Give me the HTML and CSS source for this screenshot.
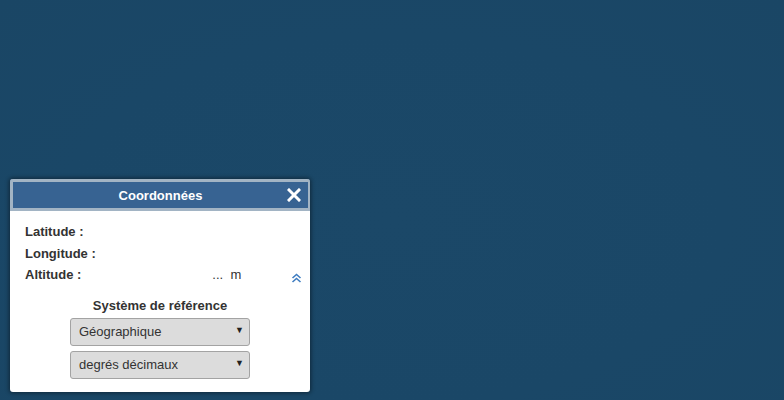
FILE: index.html
```html
<!DOCTYPE html>
<html lang="fr">
<head>
<meta charset="utf-8">
<link rel="stylesheet" href="styles.css">
</head>
<body>
<div class="map">
  <div class="panel">
    <div class="panel-header">
      <span class="panel-title">Coordonnées</span>
      <span class="close" aria-label="Fermer">
        <svg width="14" height="14" viewBox="0 0 14 14"><path d="M2 2 L12 12 M12 2 L2 12" stroke="#fff" stroke-width="3" stroke-linecap="square" fill="none"/></svg>
      </span>
    </div>
    <div class="panel-body">
      <div class="coords">
        <div class="row"><span class="label">Latitude :</span></div>
        <div class="row"><span class="label">Longitude :</span></div>
        <div class="row alt">
          <span class="label">Altitude :</span>
          <span class="alt-value">...&nbsp; m</span>
          <span class="collapse">
            <svg width="11" height="10" viewBox="0 0 11 10"><path d="M1.5 5 L5.5 1.5 L9.5 5 M1.5 9 L5.5 5.5 L9.5 9" stroke="#3f7dc1" stroke-width="1.6" fill="none"/></svg>
          </span>
        </div>
      </div>
      <div class="ref">
        <div class="ref-title">Système de référence</div>
        <div class="select"><span>Géographique</span><span class="arrow">▼</span></div>
        <div class="select"><span>degrés décimaux</span><span class="arrow">▼</span></div>
      </div>
    </div>
  </div>
</div>
</body>
</html>
```
FILE: styles.css
```css
html, body {
  margin: 0;
  padding: 0;
}
body {
  font-family: "Liberation Sans", Arial, sans-serif;
  font-size: 13px;
  color: #333;
}
.map {
  position: relative;
  width: 784px;
  height: 400px;
  background: radial-gradient(ellipse at 50% 55%, #1b4868 0%, #1a4767 60%, #1a4665 100%);
  overflow: hidden;
}
.panel {
  position: absolute;
  left: 10px;
  top: 179px;
  width: 300px;
  height: 213px;
  background: #fff;
  border-radius: 3px;
  box-shadow: 0 0 4px 1px rgba(0, 0, 0, 0.45);
  box-sizing: border-box;
  overflow: hidden;
}
.panel-header {
  position: relative;
  height: 26px;
  background: #376392;
  border: 3px solid #a2b4c4;
  border-right-width: 2px;
  display: flex;
  align-items: center;
  justify-content: center;
}
.panel-title {
  color: #fff;
  font-weight: bold;
  font-size: 13px;
}
.close {
  position: absolute;
  right: 7px;
  top: 6px;
  width: 14px;
  height: 14px;
  display: flex;
}
.panel-body {
  padding: 10px 8px 0 15px;
}
.coords {
  display: flex;
  flex-direction: column;
}
.row {
  height: 21.5px;
  display: flex;
  align-items: center;
}
.label {
  font-weight: bold;
}
.alt {
  position: relative;
}
.alt-value {
  margin-left: 131px;
  font-size: 13px;
}
.collapse {
  margin-left: auto;
  margin-right: 0;
  margin-top: 6px;
  display: flex;
}
.ref {
  display: flex;
  flex-direction: column;
  align-items: center;
  margin-top: 12px;
  margin-left: -7px;
  gap: 5px;
}
.ref-title {
  font-weight: bold;
  margin-bottom: 0;
}
.select {
  width: 180px;
  height: 28px;
  box-sizing: border-box;
  background: #dcdcdc;
  border: 1px solid #a3a3a3;
  border-radius: 3px;
  display: flex;
  align-items: center;
  justify-content: space-between;
  padding: 0 5px 0 8px;
  color: #333;
}
.arrow {
  font-size: 9px;
  color: #222;
  margin-top: -4px;
}
```
